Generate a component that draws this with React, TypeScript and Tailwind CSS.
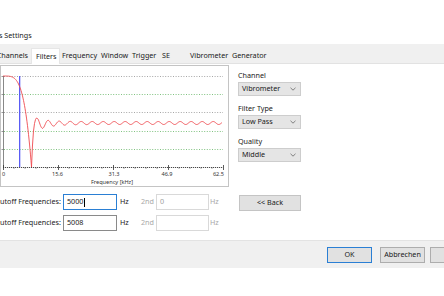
import React from "react";

const curve = (() => {
  const pts: string[] = [];
  for (let x = 3; x <= 31.5; x += 0.5) {
    const t = (x - 3) / 28.5;
    pts.push(`${x.toFixed(1)},${(11 + 91 * Math.pow(t, 4)).toFixed(2)}`);
  }
  pts.push("32.5,80", "33.5,66", "34.5,58.5", "35.5,54.5", "36.5,53");
  for (let x = 37; x <= 222; x += 0.5) {
    const A = 1.5 + 7 * Math.exp(-(x - 32) / 12);
    const c = 58 + 2 * Math.exp(-(x - 32) / 14);
    const y = c + A * Math.cos((2 * Math.PI * (x - 42.7)) / 11);
    pts.push(`${x.toFixed(1)},${y.toFixed(2)}`);
  }
  return pts.join(" ");
})();

function Chart() {
  const ticks = [3, 58, 113, 168, 223];
  const minor: number[] = [];
  for (let i = 0; i < 4; i++) {
    for (let k = 1; k < 5; k++) minor.push(3 + i * 55 + (k * 55) / 5);
  }
  const grid = [
    { y: 11.5, c: "#8f8f8f" },
    { y: 29.5, c: "#5fb35f" },
    { y: 47.5, c: "#8f8f8f" },
    { y: 66.5, c: "#5fb35f" },
    { y: 84.5, c: "#5fb35f" },
  ];
  return (
    <svg width="229" height="122" viewBox="0 0 229 122" className="block">
      <rect x="0.5" y="0.5" width="228" height="121" fill="white" stroke="#c4c4c4" />
      {grid.map((g) => (
        <line key={g.y} x1="4" x2="223" y1={g.y} y2={g.y} stroke={g.c} strokeWidth="0.8" strokeDasharray="1 1.6" />
      ))}
      <line x1="3.5" x2="3.5" y1="11" y2="102.5" stroke="#555" strokeWidth="0.7" />
      {grid.map((g) => (
        <line key={"t" + g.y} x1="1.5" x2="3.5" y1={g.y} y2={g.y} stroke="#555" strokeWidth="0.6" />
      ))}
      <line x1="3" x2="223" y1="102.5" y2="102.5" stroke="#333" strokeWidth="0.9" strokeDasharray="1.2 0.8" />
      {ticks.map((t) => (
        <line key={t} x1={t + 0.5} x2={t + 0.5} y1="100" y2="105" stroke="#333" strokeWidth="0.8" />
      ))}
      {minor.map((t) => (
        <line key={"m" + t} x1={t} x2={t} y1="102" y2="104" stroke="#555" strokeWidth="0.5" />
      ))}
      <rect x="19" y="11" width="1.3" height="91" fill="#5a5cf5" />
      <polyline points={curve} fill="none" stroke="#ee4a4f" strokeWidth="0.9" strokeLinejoin="round" />
      <g fontFamily="'Noto Sans', sans-serif" fontSize="5.6" fill="#333">
        <text x="2" y="110.5">0</text>
        <text x="57.5" y="110.5" textAnchor="middle">15.6</text>
        <text x="114" y="110.5" textAnchor="middle">31.3</text>
        <text x="167" y="110.5" textAnchor="middle">46.9</text>
        <text x="224" y="110.5" textAnchor="end">62.5</text>
        <text x="112" y="118.5" textAnchor="middle">Frequency [kHz]</text>
      </g>
    </svg>
  );
}

function Chevron() {
  return (
    <svg width="6" height="4" viewBox="0 0 6 4" className="block">
      <polyline points="0.5,0.8 3,3.2 5.5,0.8" fill="none" stroke="#666" strokeWidth="0.8" />
    </svg>
  );
}

function Select({ value }: { value: string }) {
  return (
    <div className="mt-[1px] h-[14px] w-[63px] bg-[#e5e5e5] border border-[#cdcdcd] flex items-center justify-between pl-[3px] pr-[4px]">
      <span className="leading-none">{value}</span>
      <Chevron />
    </div>
  );
}

const tabs = [
  { name: "Channels", w: "w-[31px]", sel: false, right: true },
  { name: "Filters", w: "w-[29px]", sel: true, right: false },
  { name: "Frequency", w: "w-[39px]", sel: false, right: false },
  { name: "Window", w: "w-[31px]", sel: false, right: false },
  { name: "Trigger", w: "w-[30px]", sel: false, right: false },
  { name: "SE", w: "w-[28px]", sel: false, right: false },
  { name: "Vibrometer", w: "w-[42px]", sel: false, right: false },
  { name: "Generator", w: "w-[40px]", sel: false, right: false },
];

function FreqRow({ value, focused, second, caret }: { value: string; focused: boolean; second: string; caret?: boolean }) {
  return (
    <div className="flex items-center h-[16px]">
      <span className="w-[63px] shrink-0 whitespace-nowrap leading-none">utoff Frequencies:</span>
      <div
        className={
          "w-[54px] shrink-0 h-[16px] bg-white flex items-center pl-[3px] " +
          (focused ? "border border-[#2a7fd4]" : "border border-[#8a8a8a]")
        }
      >
        <span className="leading-none">{value}</span>
        {caret && <span className="ml-[0.5px] h-[9px] border-l border-black" />}
      </div>
      <span className="ml-[3px] w-[21px] shrink-0 leading-none">Hz</span>
      <span className="w-[15px] shrink-0 leading-none text-[#a8a8a8]">2nd</span>
      <div className="w-[53px] shrink-0 h-[16px] bg-white border border-[#d9d9d9] flex items-center pl-[3px]">
        <span className="leading-none text-[#a0a0a0]">{second}</span>
      </div>
      <span className="ml-[1px] leading-none text-[#a8a8a8]">Hz</span>
    </div>
  );
}

function Btn({ label, primary }: { label: string; primary?: boolean }) {
  return (
    <div
      className={
        "shrink-0 w-[45px] h-[16px] flex items-center justify-center bg-[#e1e1e1] " +
        (primary ? "border border-[#2a7fd4]" : "border border-[#adadad]")
      }
    >
      <span className="leading-none">{label}</span>
    </div>
  );
}

export default function App() {
  return (
    <div className="w-[444px] h-[296px] bg-white overflow-hidden font-['Noto_Sans',sans-serif] text-[7.2px] text-[#1a1a1a]">
      <div className="h-[44px] pt-[29px]">
        <span className="block leading-[12px] ml-[-1px]">s Settings</span>
      </div>
      <div className="h-[20px] bg-[#f0f0f0] flex items-end border-b border-[#e2e2e2]">
        {tabs.map((t) => (
          <div
            key={t.name}
            className={
              "shrink-0 flex items-center whitespace-nowrap " +
              t.w +
              (t.right ? " justify-end pr-[3px] overflow-hidden h-[15px]" : t.sel ? " pl-[4px]" : " pl-[2px] h-[15px]") +
              (t.sel ? " bg-white border-x border-t border-[#e6e6e6] mb-[-1px] h-[16px]" : "")
            }
          >
            <span className="leading-none">{t.name}</span>
          </div>
        ))}
      </div>
      <div className="h-[176px] flex">
        <div className="w-[229px] shrink-0 flex flex-col">
          <div className="mt-[1px]">
            <Chart />
          </div>
          <div className="mt-[7px]">
            <FreqRow value="5000" focused second="0" caret />
          </div>
          <div className="mt-[5px]">
            <FreqRow value="5008" focused={false} second="" />
          </div>
        </div>
        <div className="ml-[9px] flex flex-col pt-[5px]">
          <span className="block leading-[12px]">Channel</span>
          <Select value="Vibrometer" />
          <span className="block leading-[12px] mt-[6px]">Filter Type</span>
          <Select value="Low Pass" />
          <span className="block leading-[12px] mt-[6px]">Quality</span>
          <Select value="Middle" />
          <div className="mt-[33px] ml-[1px] w-[62px] h-[16px] bg-[#e1e1e1] border border-[#c4c4c4] flex items-center justify-center">
            <span className="leading-none">&lt;&lt; Back</span>
          </div>
        </div>
      </div>
      <div className="h-[28px] bg-[#f0f0f0] border-t border-[#e3e3e3] flex items-start pt-[6px] pl-[327px] gap-[8px] overflow-hidden">
        <Btn label="OK" primary />
        <Btn label="Abbrechen" />
        <div className="ml-[-3px]">
          <Btn label="" />
        </div>
      </div>
    </div>
  );
}
